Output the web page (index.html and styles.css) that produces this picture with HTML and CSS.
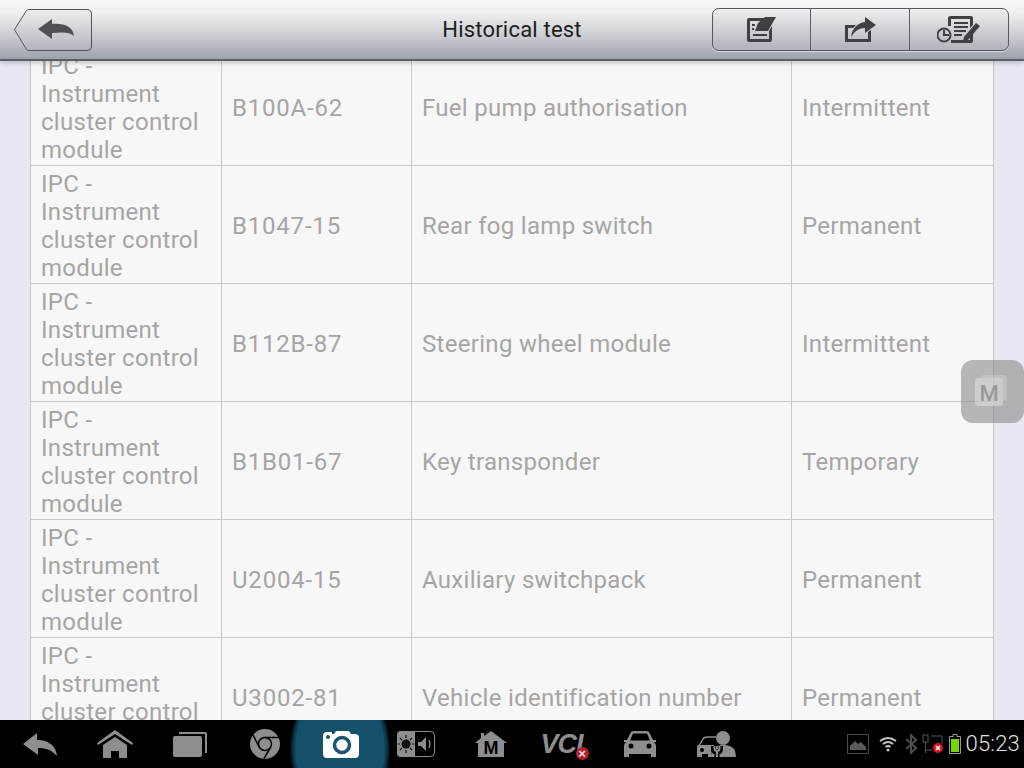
FILE: index.html
```html
<!DOCTYPE html>
<html lang="en">
<head>
    <meta charset="UTF-8">
    <title>Historical test</title>
    <link rel="stylesheet" href="styles.css">
</head>
<body>
    <div class="screen">
        <header class="topbar">
            <button class="back-btn">
                <svg width="80" height="44" viewBox="0 0 80 44">
                    <defs>
                        <linearGradient id="backFill" x1="0" y1="0" x2="0" y2="1">
                            <stop offset="0" stop-color="#eeeff1"/>
                            <stop offset="1" stop-color="#b1b4bc"/>
                        </linearGradient>
                    </defs>
                    <path d="M1.500 21.500 L13.500 2.500 Q14.500 1.500 16 1.500 L74 1.500 Q78.500 1.500 78.500 6 L78.500 38 Q78.500 42.500 74 42.500 L16 42.500 Q14.500 42.500 13.500 41.500 Z" fill="url(#backFill)" stroke="#50535a" stroke-width="1"/>
                    <path d="M25 21 L39 11 L39 16 C50 15 60 18 61 28 C57 24 50 24 39 25 L39 31 Z" fill="#4f5054"/>
                </svg>
            </button>
            <h1 class="title">Historical test</h1>
            <div class="tool-group">
                <button class="tool-btn">
                    <svg width="30" height="26" viewBox="0 0 30 26" fill="#3f4043">
                        <path fill-rule="evenodd" d="M2 1 H19 L17 4 H3 V22 H22 V14 L25 9 V23 Q25 25 23 25 H2 Q0 25 0 23 V3 Q0 1 2 1 Z"/>
                        <path d="M11 6 L18 0 H29 L21 14 H8 Z"/>
                        <path d="M5 7 H8 V9 H5 Z M5 11 H7 V13 H5 Z M6 17 H20 V19 H6 Z"/>
                    </svg>
                </button>
                <button class="tool-btn">
                    <svg width="32" height="26" viewBox="0 0 32 26" fill="#3f4043">
                        <path d="M1 8 H12 L9 11 H4 V22 H24 V15 L27 13 V25 H1 Z"/>
                        <path d="M21 0 L32 8 L21 16 V11 C15 11 11 14 7 20 C8 12 13 6 21 5 Z"/>
                    </svg>
                </button>
                <button class="tool-btn">
                    <svg width="44" height="29" viewBox="0 0 44 29" fill="#3f4043">
                        <path d="M14 1 H34 Q36 1 36 3 V10 L33 13 V4 H14 V11 H11 V3 Q11 1 14 1 Z M33 21 L36 18 V26 Q36 28 34 28 H14 V25 H33 Z"/>
                        <path d="M17 7 H31 V9 H17 Z M17 11 H31 V13 H17 Z M17 15 H29 V17 H17 Z M17 19 H25 V21 H17 Z"/>
                        <path d="M27 22 L39 8 L43 11 L31 25 L26 26 Z"/>
                        <circle cx="7" cy="20" r="6.500" fill="none" stroke="#3f4043" stroke-width="2"/>
                        <path d="M6 15 H8 V19 H12 V21 H6 Z"/>
                    </svg>
                </button>
            </div>
        </header>

        <main class="content">
            <table class="dtc-table">
                <tr>
                    <td>IPC - Instrument cluster control module</td>
                    <td>B100A-62</td>
                    <td>Fuel pump authorisation</td>
                    <td>Intermittent</td>
                </tr>
                <tr>
                    <td>IPC - Instrument cluster control module</td>
                    <td>B1047-15</td>
                    <td>Rear fog lamp switch</td>
                    <td>Permanent</td>
                </tr>
                <tr>
                    <td>IPC - Instrument cluster control module</td>
                    <td>B112B-87</td>
                    <td>Steering wheel module</td>
                    <td>Intermittent</td>
                </tr>
                <tr>
                    <td>IPC - Instrument cluster control module</td>
                    <td>B1B01-67</td>
                    <td>Key transponder</td>
                    <td>Temporary</td>
                </tr>
                <tr>
                    <td>IPC - Instrument cluster control module</td>
                    <td>U2004-15</td>
                    <td>Auxiliary switchpack</td>
                    <td>Permanent</td>
                </tr>
                <tr>
                    <td>IPC - Instrument cluster control module</td>
                    <td>U3002-81</td>
                    <td>Vehicle identification number</td>
                    <td>Permanent</td>
                </tr>
            </table>
        </main>

        <div class="float-btn">
            <span class="float-tile">M</span>
        </div>

        <footer class="navbar">
            <div class="nav-icons">
                <span class="nav-slot">
                    <svg width="34" height="24" viewBox="0 0 34 24" fill="#8e8e8e">
                        <path d="M0 12 L14 1 V8 C26 8 33 14 34 24 C28 18 24 16 15 16 V23 Z"/>
                    </svg>
                </span>
                <span class="nav-slot">
                    <svg width="36" height="28" viewBox="0 0 36 28" fill="#8e8e8e">
                        <path d="M18 0 L36 13 L35 15 L18 4 L1 15 L0 13 Z"/>
                        <path d="M18 7 L30 15 V28 H22 V21 H14 V28 H6 V15 Z"/>
                    </svg>
                </span>
                <span class="nav-slot">
                    <svg width="34" height="26" viewBox="0 0 34 26" fill="#8e8e8e">
                        <rect x="0" y="5" width="29" height="21" rx="2"/>
                        <path d="M6 3 V1 H32 Q34 1 34 3 V22 H32 V3 Z"/>
                    </svg>
                </span>
                <span class="nav-slot">
                    <svg width="30" height="30" viewBox="0 0 30 30">
                        <circle cx="15" cy="15" r="15" fill="#8e8e8e"/>
                        <circle cx="15" cy="15" r="6.500" fill="#8e8e8e" stroke="#000" stroke-width="1.500"/>
                        <path d="M15 8.500 H29 M9.500 18.500 L3 6 M20.500 18.500 L14 29.500" stroke="#000" stroke-width="1.500" fill="none"/>
                    </svg>
                </span>
                <span class="nav-slot nav-active">
                    <svg class="nudge" width="36" height="28" viewBox="0 0 36 28">
                        <path d="M4 2 H9 V4 H11 L13 1 H26 L28 4 H32 Q36 4 36 8 V24 Q36 28 32 28 H4 Q0 28 0 24 V6 Q0 2 4 2 Z" fill="#fff"/>
                        <circle cx="19" cy="15" r="7.500" fill="none" stroke="#1a556d" stroke-width="3.500"/>
                        <circle cx="5" cy="7" r="2" fill="#1a556d"/>
                    </svg>
                </span>
                <span class="nav-slot">
                    <svg class="nudge" width="38" height="26" viewBox="0 0 38 26">
                        <rect x="0.500" y="0.500" width="37" height="25" rx="4" fill="none" stroke="#8e8e8e"/>
                        <path d="M4 0 H18 V26 H4 Q0 26 0 22 V4 Q0 0 4 0 Z" fill="#8e8e8e"/>
                        <circle cx="9" cy="13" r="4.500" fill="#111"/>
                        <path d="M9 4 V7 M9 19 V22 M1 13 H3 M15 13 H17 M3 7 L5 9 M15 7 L13 9 M3 19 L5 17 M15 19 L13 17" stroke="#111" stroke-width="1.200"/>
                        <path d="M21 11 H24 L29 6 V20 L24 15 H21 Z" fill="#8e8e8e"/>
                        <path d="M32 9 Q34 13 32 17" fill="none" stroke="#8e8e8e" stroke-width="1.200"/>
                    </svg>
                </span>
                <span class="nav-slot">
                    <svg class="nudge" width="32" height="26" viewBox="0 0 32 26" fill="#8e8e8e">
                        <path d="M16 0 L32 12 L29 12 V26 H3 V12 H0 L6 7 V2 H9 V5 Z"/>
                        <text x="16" y="23" class="m-mark">M</text>
                    </svg>
                </span>
                <span class="nav-slot">
                    <span class="vci-mark">VCI<i class="vci-x">×</i></span>
                </span>
                <span class="nav-slot">
                    <svg width="32" height="26" viewBox="0 0 32 26" fill="#8e8e8e">
                        <path d="M7 1 Q8 0 10 0 H22 Q24 0 25 1 L29 9 L32 9 V11 L30 11 Q32 13 32 15 V26 H27 V23 H5 V26 H0 V15 Q0 13 2 11 L0 11 V9 H3 Z M9 2.500 L6 9.500 H26 L23 2.500 Z"/>
                        <circle cx="7" cy="15" r="2.500" fill="#000"/>
                        <circle cx="25" cy="15" r="2.500" fill="#000"/>
                    </svg>
                </span>
                <span class="nav-slot">
                    <svg class="nudge-wide" width="40" height="28" viewBox="0 0 40 28" fill="#8e8e8e">
                        <path d="M3 16 L7 9 Q8 7 12 7 H20" fill="none" stroke="#8e8e8e" stroke-width="1.500"/>
                        <path d="M1 27 V17 Q1 15 3 15 H18 L15 20 L16 27 H12 V24 H6 V27 Z"/>
                        <circle cx="6" cy="20" r="2" fill="#000"/>
                        <circle cx="27" cy="8" r="7"/>
                        <path d="M15 27 Q15 16 25 15 H30 Q40 16 40 27 Z"/>
                        <path d="M21 27 V22 M17.500 16 V19 Q17.500 22 21 22 Q24.500 22 24.500 19 V16" fill="none" stroke="#000" stroke-width="5"/>
                        <path d="M21 27 V21 M18.500 16 V18.500 Q18.500 21 21 21 Q23.500 21 23.500 18.500 V16" fill="none" stroke="#8e8e8e" stroke-width="2"/>
                    </svg>
                </span>
            </div>
            <div class="status-icons">
                <svg width="22" height="20" viewBox="0 0 22 20">
                    <rect x="0.500" y="0.500" width="21" height="19" fill="none" stroke="#4c4c4c"/>
                    <path d="M3 16 V12 L8 7 L11 10 L14 8 L19 13 V16 Z" fill="#5a5a5a"/>
                </svg>
                <svg class="icon-wifi" width="18" height="16" viewBox="0 0 18 16" fill="none" stroke="#c4c4c4" stroke-width="2">
                    <path d="M1 5 Q9 -1 17 5 M4 8 Q9 4 14 8 M6.500 11 Q9 9 11.500 11"/>
                    <circle cx="9" cy="14" r="1.500" fill="#c4c4c4" stroke="none"/>
                </svg>
                <svg class="icon-bt" width="12" height="20" viewBox="0 0 12 20" fill="none" stroke="#4c4c4c" stroke-width="2">
                    <path d="M1 5 L11 14 L6 19 V1 L11 6 L1 15"/>
                </svg>
                <svg class="icon-net" width="21" height="20" viewBox="0 0 21 20">
                    <rect x="1" y="1" width="5" height="7" fill="none" stroke="#555"/>
                    <path d="M3.500 8 V19 M3.500 16 H10 M9 2 H20 V10" fill="none" stroke="#555"/>
                    <circle cx="16" cy="14" r="5" fill="#e0141e"/>
                    <path d="M14 12 L18 16 M18 12 L14 16" stroke="#fff" stroke-width="1.500"/>
                </svg>
                <svg class="icon-battery" width="12" height="20" viewBox="0 0 12 20">
                    <path d="M4 0.500 H8 V2.500 H11.500 V19.500 H0.500 V2.500 H4 Z" fill="none" stroke="#9a9a9a"/>
                    <rect x="2" y="5" width="8" height="13" fill="#76d600"/>
                </svg>
                <span class="clock">05:23</span>
            </div>
        </footer>
    </div>
</body>
</html>
```

FILE: styles.css
```css
* {
    box-sizing: border-box;
}
html, body {
    margin: 0;
    padding: 0;
}
body {
    font-family: Roboto, "Liberation Sans", sans-serif;
    background: #000;
}
.screen {
    position: relative;
    display: flex;
    flex-direction: column;
    width: 1024px;
    height: 768px;
    overflow: hidden;
}

/* top bar */
.topbar {
    position: relative;
    z-index: 2;
    display: flex;
    justify-content: space-between;
    align-items: flex-start;
    flex: 0 0 61px;
    padding: 8px 15px 0 13px;
    background: linear-gradient(#f7f7f7 0, #f1f1f2 20%, #c9cbd0 62%, #9ea2ab 100%);
    border-bottom: 2px solid #5d6068;
    box-shadow: 0 1px 6px rgba(60, 60, 70, 0.35);
}
.back-btn {
    padding: 0;
    border: 0;
    background: none;
    height: 44px;
}
.title {
    position: absolute;
    left: 0;
    right: 0;
    top: 16px;
    margin: 0;
    font-size: 22px;
    line-height: 27px;
    font-weight: 400;
    letter-spacing: 0.2px;
    text-align: center;
    color: #1c1c1c;
}
.tool-group {
    position: relative;
    display: flex;
    width: 297px;
    height: 43px;
    border: 1px solid #54575e;
    border-radius: 7px;
    background: linear-gradient(#eeeff1, #b0b3bb);
    box-shadow: 0 1px 0 rgba(255, 255, 255, 0.5);
}
.tool-btn {
    flex: 1;
    display: flex;
    justify-content: center;
    align-items: center;
    padding: 0;
    border: 0;
    border-right: 1px solid #5d6068;
    background: none;
}
.tool-btn:first-child {
    flex: 0 0 98px;
}
.tool-btn:last-child {
    border-right: 0;
}

/* table */
.content {
    flex: 1;
    overflow: hidden;
    padding: 0 30px;
    background: #e6e9f1;
}
.dtc-table {
    width: 964px;
    margin-top: -14px;
    border-collapse: collapse;
    table-layout: fixed;
    background: #f7f7f7;
    color: #a5a5a5;
    font-size: 24px;
    line-height: 28px;
    letter-spacing: 0.3px;
}
.dtc-table td {
    height: 118px;
    padding: 2px 10px 0;
    border: 1px solid #c8c8c8;
    vertical-align: middle;
}
.dtc-table td:nth-child(1) {
    width: 191px;
}
.dtc-table td:nth-child(2) {
    width: 190px;
    letter-spacing: 0.8px;
}
.dtc-table td:nth-child(3) {
    width: 380px;
}

/* floating shortcut */
.float-btn {
    position: absolute;
    top: 360px;
    left: 961px;
    display: flex;
    justify-content: center;
    align-items: center;
    width: 63px;
    height: 63px;
    border-radius: 12px;
    background: rgba(130, 130, 130, 0.55);
}
.float-tile {
    width: 28px;
    height: 28px;
    margin-right: 7px;
    border-radius: 4px;
    background: rgba(225, 225, 225, 0.55);
    box-shadow: 5px -4px 0 -1px rgba(225, 225, 225, 0.3);
    font-size: 22px;
    font-weight: 500;
    line-height: 31px;
    text-align: center;
    color: #989898;
}

/* system bar */
.navbar {
    position: relative;
    z-index: 2;
    display: flex;
    justify-content: space-between;
    align-items: center;
    flex: 0 0 48px;
    padding-left: 2px;
    background: #000;
}
.nav-icons {
    display: flex;
}
.nav-slot {
    position: relative;
    display: flex;
    justify-content: center;
    align-items: center;
    width: 75px;
    height: 48px;
}
.nav-slot svg {
    position: relative;
}
.nav-slot .nudge {
    margin-left: 2px;
}
.nav-slot .nudge-wide {
    margin-left: 3px;
}
.nav-active::before {
    content: "";
    position: absolute;
    left: -12px;
    top: 0;
    width: 100px;
    height: 48px;
    background: radial-gradient(ellipse 50px 70px at 50% 60%, #15516a 0, #14506a 88%, #06202b 97%, #000 100%);
}
.m-mark {
    font-family: "Liberation Sans", sans-serif;
    font-size: 18px;
    font-weight: 700;
    text-anchor: middle;
    fill: #000;
}
.vci-mark {
    position: relative;
    margin-right: 6px;
    font-family: "Liberation Sans", sans-serif;
    font-size: 27px;
    font-style: italic;
    font-weight: 700;
    letter-spacing: -1px;
    color: #8e8e8e;
}
.vci-x {
    position: absolute;
    right: -6px;
    bottom: 0;
    width: 13px;
    height: 13px;
    border-radius: 50%;
    background: #b5202a;
    font-size: 13px;
    font-style: normal;
    line-height: 13px;
    letter-spacing: 0;
    text-align: center;
    color: #e6e6e6;
}
.status-icons {
    display: flex;
    align-items: center;
    padding-right: 4px;
}
.icon-wifi {
    margin-left: 10px;
}
.icon-bt {
    margin-left: 8px;
}
.icon-net {
    margin-left: 5px;
}
.icon-battery {
    margin-left: 6px;
}
.clock {
    margin-left: 5px;
    font-size: 22px;
    font-weight: 300;
    line-height: 24px;
    letter-spacing: 0.2px;
    color: #e0e0e0;
}
```
